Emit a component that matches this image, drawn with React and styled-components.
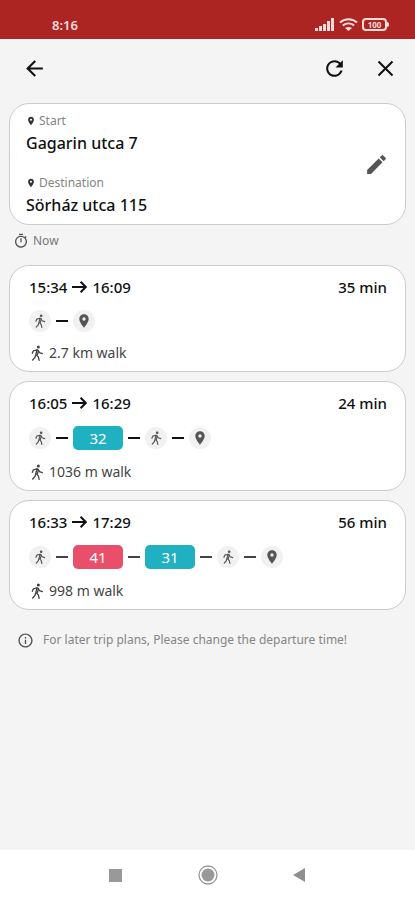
import React from "react";
import styled, { createGlobalStyle } from "styled-components";
import {
  MdArrowBack,
  MdRefresh,
  MdEdit,
  MdOutlineTimer,
  MdLocationOn,
  MdInfoOutline,
} from "react-icons/md";

const GlobalStyle = createGlobalStyle`
  * { box-sizing: border-box; }
  body {
    margin: 0;
    background: #f4f4f4;
    color: #111;
    font-family: "Noto Sans", "Open Sans", sans-serif;
  }
  svg { display: block; flex: none; }
`;

const Screen = styled.div`
  display: flex;
  flex-direction: column;
  min-height: 100vh;
`;

const StatusBar = styled.div`
  display: flex;
  align-items: center;
  justify-content: space-between;
  height: 39px;
  padding: 10px 26px 0 52px;
  background: #ad2522;
  color: #f9dcda;
`;

const Clock = styled.span`
  font-size: 13px;
  line-height: 16px;
  font-weight: 600;
`;

const StatusIcons = styled.div`
  display: flex;
  align-items: center;
  gap: 4px;
`;

const Battery = styled.div`
  display: flex;
  align-items: center;
`;

const BatteryBody = styled.span`
  width: 25px;
  height: 13px;
  border: 2px solid #f9dcda;
  border-radius: 4px;
  font-size: 8px;
  line-height: 9px;
  font-weight: 700;
  text-align: center;
`;

const BatteryTip = styled.span`
  width: 2px;
  height: 5px;
  border-radius: 0 2px 2px 0;
  background: #f9dcda;
`;

const AppBar = styled.header`
  display: flex;
  align-items: center;
  gap: 26px;
  padding: 17px 17px 22px 22px;
`;

const IconButton = styled.button`
  display: flex;
  padding: 0;
  border: 0;
  background: none;
  color: ${(p) => p.$color || "#111"};
  cursor: pointer;
`;

const Spacer = styled.div`
  flex: 1;
`;

const Content = styled.main`
  display: flex;
  flex: 1;
  flex-direction: column;
  padding: 0 9px;
`;

const Card = styled.section`
  border: 1px solid #cbcbcb;
  border-radius: 20px;
  background: #fff;
`;

const RouteCard = styled(Card)`
  display: flex;
  align-items: center;
  justify-content: space-between;
  padding: 7px 16px;
`;

const Places = styled.div`
  display: flex;
  flex-direction: column;
  gap: 18px;
`;

const PlaceLabel = styled.div`
  display: flex;
  align-items: center;
  gap: 3px;
  font-size: 12px;
  line-height: 20px;
  color: #858585;

  svg { color: #333; }
`;

const PlaceName = styled.div`
  font-size: 16px;
  line-height: 24px;
  font-weight: 500;
`;

const Departure = styled.button`
  display: flex;
  align-items: center;
  align-self: flex-start;
  gap: 4px;
  padding: 0;
  margin: 6px 0 14px 4px;
  border: 0;
  background: none;
  font: inherit;
  font-size: 12px;
  line-height: 20px;
  color: #777;
  cursor: pointer;

  svg { color: #555; }
`;

const TripList = styled.div`
  display: flex;
  flex-direction: column;
  gap: 9px;
`;

const TripCard = styled(Card)`
  padding: 10px 18px 8px 19px;
`;

const TripHeader = styled.div`
  display: flex;
  align-items: center;
  justify-content: space-between;
  font-size: 15px;
  line-height: 22px;
  font-weight: 500;
`;

const Times = styled.div`
  display: flex;
  align-items: center;
  gap: 4px;
`;

const Legs = styled.div`
  display: flex;
  align-items: center;
  gap: 5px;
  min-height: 23px;
  margin: 11px 0;
`;

const Dash = styled.span`
  width: 12px;
  height: 2px;
  background: ${(p) => (p.$soft ? "#444" : "#111")};
`;

const Stop = styled.span`
  display: flex;
  align-items: center;
  justify-content: center;
  width: 22px;
  height: 22px;
  border-radius: 50%;
  background: #f1f1f1;
  color: #555;
`;

const LineBadge = styled.span`
  width: 50px;
  margin: 1px 0;
  border-radius: 5px;
  background: ${(p) => p.$color};
  color: #fff;
  font-size: 15px;
  line-height: 24px;
  text-align: center;
`;

const Walk = styled.div`
  display: flex;
  align-items: center;
  gap: 4px;
  font-size: 14px;
  line-height: 20px;
  color: #444;
`;

const Hint = styled.p`
  display: flex;
  align-items: center;
  gap: 9px;
  margin: 20px 8px;
  font-size: 12px;
  line-height: 20px;
  color: #858585;

  svg { color: #555; }
`;

const NavBar = styled.nav`
  display: flex;
  align-items: center;
  justify-content: center;
  gap: 71px;
  height: 50px;
  background: #fff;
`;

const SignalIcon = () => (
  <svg width="20" height="13" viewBox="0 0 20 13" fill="currentColor">
    <rect x="0" y="10" width="3" height="3" />
    <rect x="4" y="8" width="3" height="5" />
    <rect x="8" y="6" width="3" height="7" />
    <rect x="12" y="3" width="3" height="10" />
    <rect x="16" y="0" width="3" height="13" />
  </svg>
);

const WifiIcon = () => (
  <svg width="19" height="13" viewBox="0 0 19 13" fill="none" stroke="currentColor" strokeWidth="2">
    <path d="M1 4.6C5.8.2 13.2.2 18 4.6" />
    <path d="M3.8 7.6c3.4-2.8 8-2.8 11.4 0" />
    <path d="M6 10c2.1-1.5 4.9-1.5 7 0l-3.5 3z" fill="currentColor" stroke="none" />
  </svg>
);

const ArrowIcon = () => (
  <svg width="17" height="14" viewBox="0 0 17 14" fill="none" stroke="currentColor" strokeWidth="2">
    <path d="M1 7h14M9.6 1.8 14.8 7l-5.2 5.2" />
  </svg>
);

const CloseIcon = () => (
  <svg width="25" height="25" viewBox="0 0 25 25" fill="none" stroke="currentColor" strokeWidth="2">
    <path d="m5.5 5.5 14 14M19.500 5.500l-14 14" />
  </svg>
);

const WalkIcon = ({ size }) => (
  <svg
    width={size}
    height={size}
    viewBox="0 0 24 24"
    fill="none"
    stroke="currentColor"
    strokeWidth="2"
    strokeLinecap="round"
    strokeLinejoin="round"
  >
    <circle cx="14" cy="3" r="2.300" fill="currentColor" stroke="none" />
    <path d="M5 12.500 6.500 8.800 12 7.200l2 1.300 1.700 3L20 13" />
    <path d="m12 7.500-1.800 6.700 3.800 3.600 1.200 5.200" />
    <path d="m14 8.800-1.400 6" />
    <path d="M9.800 15.500 9 18.500 5.500 22.500" />
  </svg>
);

const RecentsIcon = () => (
  <svg width="22" height="22" viewBox="0 0 22 22">
    <rect x="4" y="5" width="13" height="13" fill="#999" />
  </svg>
);

const HomeIcon = () => (
  <svg width="20" height="20" viewBox="0 0 20 20">
    <circle cx="10" cy="10" r="9" fill="none" stroke="#999" strokeWidth="1.3" />
    <circle cx="10" cy="10" r="6.5" fill="#999" />
  </svg>
);

const BackIcon = () => (
  <svg width="22" height="22" viewBox="0 0 22 22">
    <path d="M4 11 16 4v14z" fill="#8f8f8f" />
  </svg>
);

const TEAL = "#1fb1c1";
const PINK = "#e94f6b";

const trips = [
  { from: "15:34", to: "16:09", duration: "35 min", walk: "2.7 km walk", legs: [{ type: "walk" }, { type: "end" }] },
  {
    from: "16:05",
    to: "16:29",
    duration: "24 min",
    walk: "1036 m walk",
    legs: [{ type: "walk" }, { type: "line", name: "32", color: TEAL }, { type: "walk" }, { type: "end" }],
  },
  {
    from: "16:33",
    to: "17:29",
    duration: "56 min",
    walk: "998 m walk",
    soft: true,
    legs: [
      { type: "walk" },
      { type: "line", name: "41", color: PINK },
      { type: "line", name: "31", color: TEAL },
      { type: "walk" },
      { type: "end" },
    ],
  },
];

function Leg({ leg }) {
  if (leg.type === "line") return <LineBadge $color={leg.color}>{leg.name}</LineBadge>;
  return <Stop>{leg.type === "walk" ? <WalkIcon size={14} /> : <MdLocationOn size={16} />}</Stop>;
}

function Place({ label, name }) {
  return (
    <div>
      <PlaceLabel>
        <MdLocationOn size={10} />
        {label}
      </PlaceLabel>
      <PlaceName>{name}</PlaceName>
    </div>
  );
}

function Trip({ trip }) {
  return (
    <TripCard>
      <TripHeader>
        <Times>
          <span>{trip.from}</span>
          <ArrowIcon />
          <span>{trip.to}</span>
        </Times>
        <span>{trip.duration}</span>
      </TripHeader>
      <Legs>
        {trip.legs.map((leg, i) => (
          <React.Fragment key={i}>
            {i > 0 && <Dash $soft={trip.soft} />}
            <Leg leg={leg} />
          </React.Fragment>
        ))}
      </Legs>
      <Walk>
        <WalkIcon size={16} />
        {trip.walk}
      </Walk>
    </TripCard>
  );
}

export default function App() {
  return (
    <Screen>
      <GlobalStyle />
      <StatusBar>
        <Clock>8:16</Clock>
        <StatusIcons>
          <SignalIcon />
          <WifiIcon />
          <Battery>
            <BatteryBody>100</BatteryBody>
            <BatteryTip />
          </Battery>
        </StatusIcons>
      </StatusBar>
      <AppBar>
        <IconButton aria-label="Back"><MdArrowBack size={25} /></IconButton>
        <Spacer />
        <IconButton aria-label="Refresh"><MdRefresh size={25} /></IconButton>
        <IconButton aria-label="Close"><CloseIcon /></IconButton>
      </AppBar>
      <Content>
        <RouteCard>
          <Places>
            <Place label="Start" name="Gagarin utca 7" />
            <Place label="Destination" name="Sörház utca 115" />
          </Places>
          <IconButton aria-label="Edit" $color="#555"><MdEdit size={25} /></IconButton>
        </RouteCard>
        <Departure>
          <MdOutlineTimer size={16} />
          Now
        </Departure>
        <TripList>
          {trips.map((trip) => (
            <Trip key={trip.from} trip={trip} />
          ))}
        </TripList>
        <Hint>
          <MdInfoOutline size={17} />
          For later trip plans, Please change the departure time!
        </Hint>
      </Content>
      <NavBar>
        <IconButton aria-label="Recent apps"><RecentsIcon /></IconButton>
        <IconButton aria-label="Home"><HomeIcon /></IconButton>
        <IconButton aria-label="System back"><BackIcon /></IconButton>
      </NavBar>
    </Screen>
  );
}
